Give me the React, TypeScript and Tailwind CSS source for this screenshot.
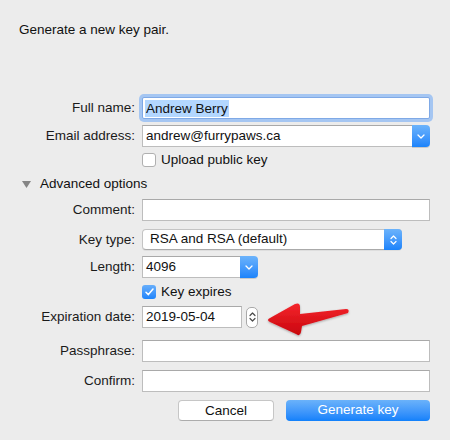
import type { ReactNode } from 'react';

const font = { fontFamily: '"Liberation Sans", Arial, sans-serif' };

const Row = ({ label, children, className = '' }: { label?: string; children: ReactNode; className?: string }) => (
  <div className={`flex items-center ${className}`}>
    <div className="w-[135px] shrink-0 text-right leading-4 text-[#1a1a1a]">{label}</div>
    <div className="ml-[7px] flex flex-1 items-center">{children}</div>
  </div>
);

const ChevronDown = () => (
  <svg width="8" height="5" viewBox="0 0 8 5" fill="none">
    <path d="M1 1l3 3 3-3" stroke="white" strokeWidth="1.3" strokeLinecap="round" strokeLinejoin="round" />
  </svg>
);

const ChevronUpDown = ({ color = 'white' }: { color?: string }) => (
  <svg width="7" height="12" viewBox="0 0 7 12" fill="none">
    <path d="M1 4.5l2.5-2.5 2.5 2.5M1 7.5l2.5 2.5 2.5-2.5" stroke={color} strokeWidth="1.2" strokeLinecap="round" strokeLinejoin="round" />
  </svg>
);

const TextField = ({ children, className = '' }: { children?: ReactNode; className?: string }) => (
  <div
    className={`flex h-[22px] items-center border border-[#bdbdbd] border-t-[#a9a9a9] bg-white pl-[3px] text-[#111] ${className}`}
  >
    {children}
  </div>
);

const Combo = ({ value, className = '' }: { value: string; className?: string }) => (
  <div className={`flex h-[22px] items-stretch ${className}`}>
    <div className="flex flex-1 items-center border border-r-0 border-[#bdbdbd] border-t-[#a9a9a9] bg-white pl-[3px] text-[#111]">
      {value}
    </div>
    <div className="flex w-[18px] items-center justify-center rounded-r-[4px] bg-gradient-to-b from-[#6bb3fb] to-[#1a83fb] shadow-[0_1px_0_rgba(0,0,0,0.15)]">
      <ChevronDown />
    </div>
  </div>
);

const Checkbox = ({ checked }: { checked?: boolean }) =>
  checked ? (
    <div className="flex h-[14px] w-[14px] items-center justify-center rounded-[3px] bg-gradient-to-b from-[#66aefb] to-[#1c84fb]">
      <svg width="9" height="8" viewBox="0 0 9 8" fill="none">
        <path d="M1 4.2l2.4 2.4L8 1" stroke="white" strokeWidth="1.5" strokeLinecap="round" strokeLinejoin="round" />
      </svg>
    </div>
  ) : (
    <div className="h-[14px] w-[14px] rounded-[3px] border border-[#b0b0b0] bg-white" />
  );

export default function App() {
  return (
    <div className="h-[440px] w-[450px] overflow-hidden bg-[#ececec] text-[13.5px] text-[#111]" style={font}>
      <div className="pl-[19px] pt-[22px] leading-4">Generate a new key pair.</div>

      <div className="pr-[20px]">
        <Row label="Full name:" className="mt-[59px]">
          <div className="flex h-[22px] flex-1 items-center rounded-[2px] border border-[#7fa9e6] bg-white pl-[2px] shadow-[0_0_0_3px_#a5c6f2]">
            <span className="bg-[#b3d7ff] px-px leading-[17px]">Andrew Berry</span>
          </div>
        </Row>

        <Row label="Email address:" className="mt-[6px]">
          <Combo value="andrew@furrypaws.ca" className="flex-1" />
        </Row>

        <Row className="mt-[5px]">
          <div className="flex items-center gap-[5px]">
            <Checkbox />
            <span className="leading-4">Upload public key</span>
          </div>
        </Row>

        <div className="mt-[8px] flex h-4 items-center pl-[22px]">
          <svg width="9" height="7" viewBox="0 0 9 7">
            <path d="M0 0h9L4.5 7z" fill="#858585" />
          </svg>
          <span className="ml-[9px]">Advanced options</span>
        </div>

        <Row label="Comment:" className="mt-[7px]">
          <TextField className="flex-1" />
        </Row>

        <Row label="Key type:" className="mt-[8px]">
          <div className="flex h-[21px] w-[260px] items-stretch rounded-[4px] border border-[#c4c4c4] border-b-[#aaaaaa] bg-white shadow-[0_1px_0_rgba(0,0,0,0.06)]">
            <div className="flex flex-1 items-center pl-[7px]">RSA and RSA (default)</div>
            <div className="-my-px -mr-px flex w-[18px] items-center justify-center rounded-r-[4px] bg-gradient-to-b from-[#6bb3fb] to-[#1a83fb]">
              <ChevronUpDown />
            </div>
          </div>
        </Row>

        <Row label="Length:" className="mt-[6px]">
          <Combo value="4096" className="h-[21px] w-[116px]" />
        </Row>

        <Row className="mt-[6px]">
          <div className="flex items-center gap-[5px]">
            <Checkbox checked />
            <span className="leading-4">Key expires</span>
          </div>
        </Row>

        <Row label="Expiration date:" className="relative mt-[6px]">
          <TextField className="w-[100px] pl-[2px]">2019-05-04</TextField>
          <div className="ml-[4px] flex h-[21px] w-[12px] items-center justify-center rounded-[5px] border border-[#a9a9a9] bg-white">
            <ChevronUpDown color="#4a4a4a" />
          </div>
          <svg className="absolute left-[264px] top-[-6px]" width="88" height="38" viewBox="0 0 88 38">
            <defs>
              <linearGradient id="red" x1="0" y1="0" x2="0" y2="1">
                <stop offset="0" stopColor="#f5262c" />
                <stop offset="1" stopColor="#c8050d" />
              </linearGradient>
              <filter id="sh" x="-10%" y="-20%" width="120%" height="150%">
                <feDropShadow dx="0" dy="1" stdDeviation="1" floodOpacity="0.3" />
              </filter>
            </defs>
            <path
              d="M4 20 Q4 19 6 18 L31 4 Q36 2 36 7 L36 14 L82 9 Q86 9 84 13 L38 26 L37 32 Q36 37 32 34 L6 22 Q4 21 4 20 Z"
              fill="url(#red)"
              filter="url(#sh)"
            />
          </svg>
        </Row>

        <Row label="Passphrase:" className="mt-[12px]">
          <TextField className="flex-1" />
        </Row>

        <Row label="Confirm:" className="mt-[8px]">
          <TextField className="flex-1" />
        </Row>

        <div className="mt-[8px] flex justify-end gap-[12px]">
          <button
            type="button"
            className="h-[21px] w-[96px] rounded-[4px] border border-[#c6c6c6] border-b-[#acacac] bg-white text-[#111]"
          >
            Cancel
          </button>
          <button
            type="button"
            className="h-[21px] w-[144px] rounded-[4px] bg-gradient-to-b from-[#6ab2fa] to-[#0f80fb] text-white"
          >
            Generate key
          </button>
        </div>
      </div>
    </div>
  );
}
